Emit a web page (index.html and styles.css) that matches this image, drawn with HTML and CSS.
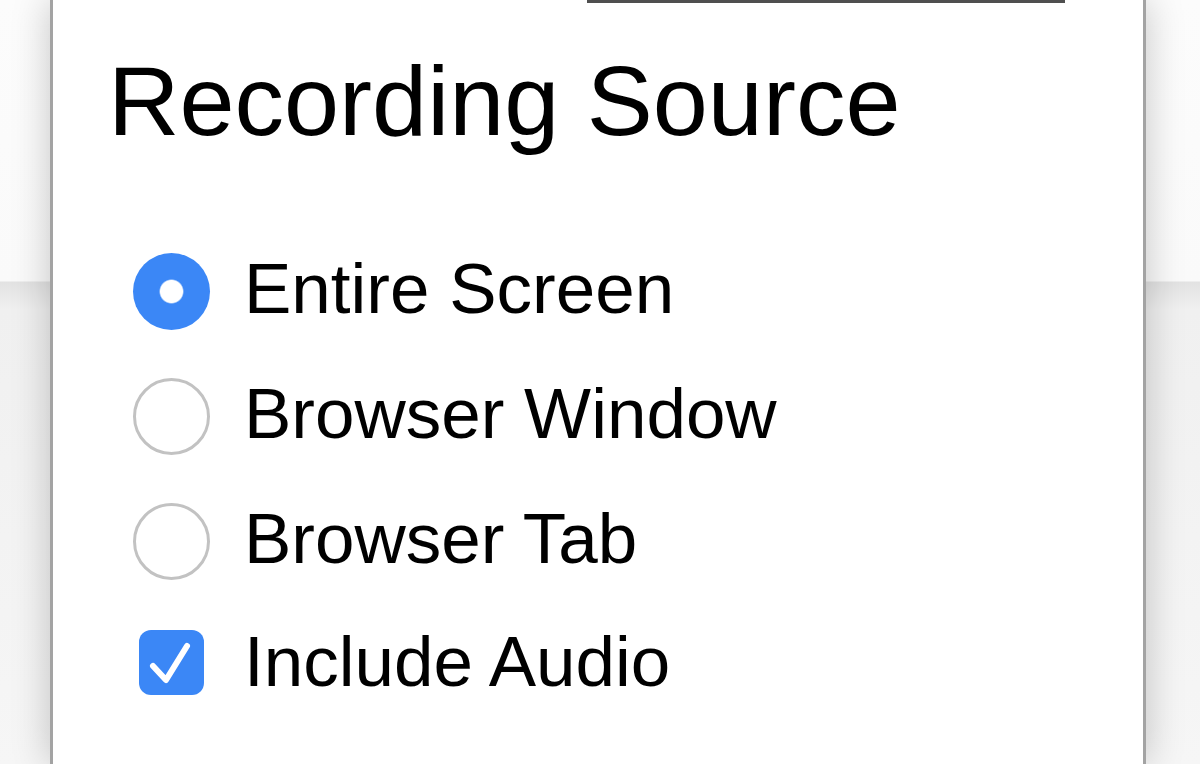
FILE: index.html
```
<!DOCTYPE html>
<html lang="en">
<head>
    <meta charset="UTF-8">
    <meta name="viewport" content="width=device-width, initial-scale=1.0">
    <title>Recording Source</title>
    <link rel="stylesheet" href="styles.css">
</head>
<body>
    <div class="panel">
        <div class="field-line"></div>
        <h1>Recording Source</h1>
        <div class="options">
            <label class="option">
                <span class="radio checked"></span>
                Entire Screen
            </label>
            <label class="option">
                <span class="radio"></span>
                Browser Window
            </label>
            <label class="option">
                <span class="radio"></span>
                Browser Tab
            </label>
            <label class="option audio">
                <span class="box-wrap">
                    <span class="checkbox">
                        <svg width="65" height="65" viewBox="0 0 65 65">
                            <path d="M14 36 L27 50 L48 16" fill="none" stroke="#fff" stroke-width="6" stroke-linecap="round" stroke-linejoin="round"/>
                        </svg>
                    </span>
                </span>
                Include Audio
            </label>
        </div>
    </div>
</body>
</html>
```

FILE: styles.css
```
html, body {
    height: 100%;
}
body {
    margin: 0;
    overflow: hidden;
    font-family: "Liberation Sans", Arial, sans-serif;
    color: #000;
    background: linear-gradient(to bottom, #fcfcfc 0, #fafafa 281px, #e2e2e2 282px, #f0f0f0 310px, #f6f6f6 100%);
}
.panel {
    width: 1090px;
    height: 100%;
    margin-left: 50px;
    background: #fff;
    border-left: 3px solid #a3a3a3;
    border-right: 3px solid #a3a3a3;
    box-shadow: 0 0 36px rgba(0, 0, 0, 0.22);
}
.field-line {
    width: 478px;
    height: 3px;
    margin-left: 534px;
    background: #4f4f4f;
}
h1 {
    margin: 48px 0 0 55px;
    font-size: 99px;
    font-weight: normal;
    line-height: 1;
}
.options {
    margin-top: 76px;
    padding-left: 80px;
}
.option {
    display: flex;
    align-items: center;
    gap: 34px;
    height: 125px;
    font-size: 71px;
    line-height: 1;
}
.option.audio {
    height: 120px;
}
.radio {
    box-sizing: border-box;
    width: 77px;
    height: 77px;
    margin-top: 6px;
    border-radius: 50%;
    border: 3px solid #c2c2c2;
    background: #fff;
    flex-shrink: 0;
}
.radio.checked {
    border: none;
    background: radial-gradient(circle, #fff 0, #fff 11px, #3b87f6 12.5px);
}
.box-wrap {
    display: flex;
    justify-content: center;
    width: 77px;
    margin-top: 3px;
    flex-shrink: 0;
}
.checkbox {
    width: 65px;
    height: 65px;
    border-radius: 12px;
    background: #3b87f6;
}
.checkbox svg {
    display: block;
}
```
